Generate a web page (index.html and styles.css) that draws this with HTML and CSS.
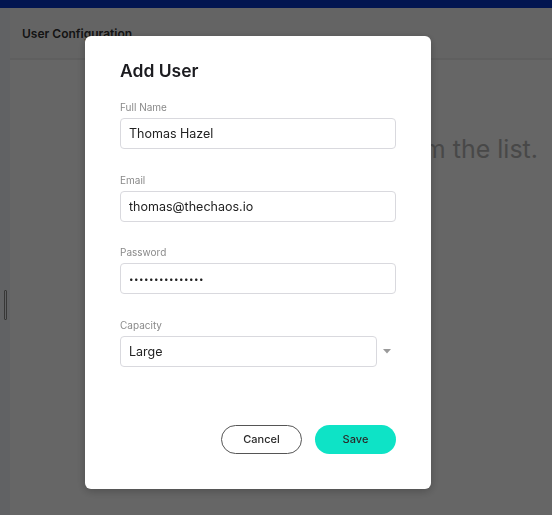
FILE: index.html
```html
<!DOCTYPE html>
<html lang="en">
<head>
    <meta charset="UTF-8">
    <meta name="viewport" content="width=device-width, initial-scale=1.0">
    <title>User Configuration</title>
    <link rel="stylesheet" href="styles.css">
</head>
<body>
    <div class="topbar"></div>
    <div class="app">
        <aside class="sidebar">
            <div class="handle"></div>
        </aside>
        <main class="main">
            <header class="page-header">
                <h1>User Configuration</h1>
            </header>
            <section class="empty">
                <p>Select a user from the list.</p>
            </section>
        </main>
    </div>

    <div class="overlay">
        <div class="modal">
            <h2>Add User</h2>
            <form class="user-form">
                <div class="field">
                    <label for="full_name">Full Name</label>
                    <input type="text" id="full_name" value="Thomas Hazel">
                </div>
                <div class="field">
                    <label for="email">Email</label>
                    <input type="text" id="email" value="thomas@thechaos.io">
                </div>
                <div class="field">
                    <label for="password">Password</label>
                    <input type="password" id="password" value="thomaspassword1">
                </div>
                <div class="field">
                    <label for="capacity">Capacity</label>
                    <div class="select-row">
                        <div class="select" id="capacity">Large</div>
                        <svg class="caret" width="8" height="5" viewBox="0 0 8 5">
                            <path d="M0 0 L8 0 L4 4.5 Z" fill="#9a9a9a"/>
                        </svg>
                    </div>
                </div>
                <div class="actions">
                    <button type="button" class="btn btn-cancel">Cancel</button>
                    <button type="button" class="btn btn-save">Save</button>
                </div>
            </form>
        </div>
    </div>
</body>
</html>
```

FILE: styles.css
```css
* {
    box-sizing: border-box;
}
body {
    margin: 0;
    font-family: 'Inter', 'Noto Sans', sans-serif;
    background: #ffffff;
    height: 100vh;
    overflow: hidden;
    display: flex;
    flex-direction: column;
}
.topbar {
    height: 8px;
    background: #021550;
    flex-shrink: 0;
}
.app {
    flex: 1;
    display: flex;
}
.sidebar {
    width: 10px;
    background: #f2f6fa;
    display: flex;
    justify-content: center;
    padding-top: 282px;
}
.handle {
    width: 3px;
    height: 30px;
    border: 1px solid #8a8a8a;
    border-radius: 1px;
}
.main {
    flex: 1;
    display: flex;
    flex-direction: column;
    background: #ffffff;
}
.page-header {
    height: 52px;
    padding: 0 12px;
    display: flex;
    align-items: center;
    border-bottom: 2px solid #eeeeee;
    background: #fbfbfb;
}
.page-header h1 {
    margin: 0;
    font-size: 12px;
    font-weight: 600;
    color: #333333;
}
.empty {
    flex: 1;
    text-align: right;
    padding: 74px 14px 0 0;
}
.empty p {
    margin: 0;
    font-size: 25px;
    color: #b5b5b5;
}
.overlay {
    position: fixed;
    top: 8px;
    left: 0;
    right: 0;
    bottom: 0;
    background: rgba(0, 0, 0, 0.6);
    padding: 28px 0 0 85px;
}
.modal {
    width: 346px;
    height: 453px;
    background: #ffffff;
    border-radius: 6px;
    padding: 24px 35px 0;
    box-shadow: 0 2px 10px rgba(0, 0, 0, 0.25);
}
.modal h2 {
    margin: 0 0 19px;
    font-size: 17.5px;
    font-weight: 600;
    color: #1b1b1f;
    line-height: 22px;
}
.field {
    margin-bottom: 24.5px;
}
.field label {
    display: block;
    font-size: 10px;
    color: #8a8a8a;
    line-height: 12px;
    margin-bottom: 5px;
}
.field input, .select {
    width: 100%;
    height: 31px;
    border: 1px solid #d9d9de;
    border-radius: 4px;
    padding: 0 8px;
    font-family: inherit;
    font-size: 12.5px;
    color: #222222;
    outline: none;
    display: flex;
    align-items: center;
}
.field input[type="password"] {
    font-size: 8px;
    letter-spacing: 0.5px;
}
.select-row {
    display: flex;
    align-items: center;
}
.select {
    width: 257px;
}
.caret {
    margin-left: 6px;
}
.actions {
    display: flex;
    justify-content: flex-end;
    gap: 13px;
    margin-top: 58px;
}
.btn {
    width: 81px;
    height: 29px;
    border-radius: 15px;
    font-family: inherit;
    font-size: 11px;
    font-weight: 500;
    color: #2a2a2a;
    cursor: pointer;
}
.btn-cancel {
    background: #ffffff;
    border: 1px solid #555555;
}
.btn-save {
    background: #0ee3c6;
    border: none;
}
```
